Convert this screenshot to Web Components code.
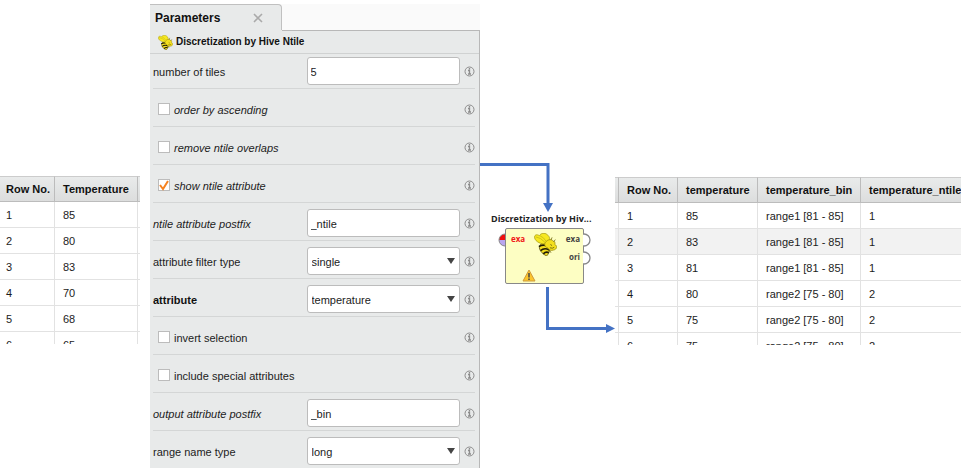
<!DOCTYPE html>
<html lang="en">
<head>
<meta charset="utf-8">
<title>Discretization by Hive Ntile</title>
<style>
    html, body {
        margin: 0;
        height: 100%;
        overflow: hidden;
        background: #fff;
        color: #1c1c1c;
        font: 11px/16px "Liberation Sans", Arial, sans-serif;
    }
</style>
</head>
<body>

<process-page>
    <data-table slot="input" widths="55,83," heads="Row No.|Temperature|"
        rows="1|85|;2|80|;3|83|;4|70|;5|68|;6|65|"></data-table>

    <param-panel slot="panel" tab="Parameters" heading="Discretization by Hive Ntile">
        <param-row type="text" label="number of tiles" value="5"></param-row>
        <param-row type="check" label="order by ascending" look="italic"></param-row>
        <param-row type="check" label="remove ntile overlaps" look="italic"></param-row>
        <param-row type="check" label="show ntile attribute" look="italic" checked></param-row>
        <param-row type="text" label="ntile attribute postfix" look="italic" value="_ntile"></param-row>
        <param-row type="select" label="attribute filter type" value="single"></param-row>
        <param-row type="select" label="attribute" look="bold" value="temperature"></param-row>
        <param-row type="check" label="invert selection"></param-row>
        <param-row type="check" label="include special attributes"></param-row>
        <param-row type="text" label="output attribute postfix" look="italic" value="_bin"></param-row>
        <param-row type="select" label="range name type" value="long"></param-row>
    </param-panel>

    <operator-flow slot="flow">
        <operator-node name="Discretization by Hiv..."></operator-node>
    </operator-flow>

    <data-table slot="output" widths="4,59,80,103," heads="|Row No.|temperature|temperature_bin|temperature_ntile" marked="1"
        rows="|1|85|range1 [81 - 85]|1;|2|83|range1 [81 - 85]|1;|3|81|range1 [81 - 85]|1;|4|80|range2 [75 - 80]|2;|5|75|range2 [75 - 80]|2;|6|75|range2 [75 - 80]|2"></data-table>
</process-page>

<script>
function attach(el, html) {
    const root = el.attachShadow({ mode: 'open' });
    root.innerHTML = html;
    return root;
}

class ProcessPage extends HTMLElement {
    constructor() {
        super();
        attach(this, `
            <style>
                :host {
                    display: grid;
                    grid-template-columns: minmax(0, 140fr) minmax(0, 340fr) 135px minmax(0, 346fr);
                    align-items: start;
                    min-height: 100%;
                }
                .input { padding-top: 176px; }
                .panel { padding: 4px 0 0 10px; }
                .flow { padding-top: 160px; }
                .output { padding-top: 177px; }
            </style>
            <div class="input"><slot name="input"></slot></div>
            <div class="panel"><slot name="panel"></slot></div>
            <div class="flow"><slot name="flow"></slot></div>
            <div class="output"><slot name="output"></slot></div>
        `);
    }
}

class DataTable extends HTMLElement {
    connectedCallback() {
        const widths = this.getAttribute('widths').split(',');
        const heads = this.getAttribute('heads').split('|');
        const rows = this.getAttribute('rows').split(';').map((row) => row.split('|'));
        const marked = parseInt(this.getAttribute('marked'), 10);
        attach(this, `
            <style>
                :host {
                    display: block;
                    /* the last row is cut by the edge of the view */
                    max-height: 168px;
                    overflow: hidden;
                }
                table {
                    width: 100%;
                    table-layout: fixed;
                    border-collapse: separate;
                    border-spacing: 0;
                }
                th, td {
                    box-sizing: border-box;
                    height: 26px;
                    padding: 0 0 0 8px;
                    text-align: left;
                    white-space: nowrap;
                    border-right: 1px solid #e2e2e2;
                    border-bottom: 1px solid #e2e2e2;
                }
                th {
                    color: #111;
                    font-weight: bold;
                    background: linear-gradient(#e9ebeb, #dcdddd);
                    border-color: #bcbcbc;
                    border-top: 1px solid #ccc;
                }
                th:first-child, td:first-child { padding-left: 6px; }
                th:last-child, td:last-child { border-right: 0; }
                th:empty, td:empty { padding: 0; }
                tr.marked td { background: #f2f2f2; }
            </style>
            <table>
                <colgroup>${widths.map((w) => `<col${w ? ` style="width:${w}px"` : ''}>`).join('')}</colgroup>
                <thead><tr>${heads.map((h) => `<th>${h}</th>`).join('')}</tr></thead>
                <tbody>${rows.map((row, i) => `
                    <tr${i === marked ? ' class="marked"' : ''}>${row.map((c) => `<td>${c}</td>`).join('')}</tr>`).join('')}
                </tbody>
            </table>
        `);
    }
}

class HiveBee extends HTMLElement {
    constructor() {
        super();
        attach(this, `
            <style>
                :host { display: block; width: 21px; height: 21px; }
                svg { display: block; width: 100%; height: 100%; }
            </style>
            <svg viewBox="0 0 42 42" aria-hidden="true">
                <path d="M13 20 C7 24 9 35 23 42 C29 36 30 28 27 20Z" fill="#f2dc1e" stroke="#3a3508" stroke-width="1.2"/>
                <path d="M9 25 Q17 19 26 25 M12 32 Q19 26 28 31 M17 38 Q22 33 27 36" fill="none" stroke="#1d1a06" stroke-width="3"/>
                <path d="M20 20 C10 20 0 14 1 6 C3 2 7 3 10 5 C12 0 20 -1 24 3 C29 6 30 13 27 18Z" fill="#f6e820" stroke="#a79b16" stroke-width="1.4"/>
                <path d="M3 7 Q12 8 20 17 M11 5 Q18 8 22 15" fill="none" stroke="#c9bb16" stroke-width="1.6"/>
                <path d="M21 17 C24 12 32 10 35 15 C38 14 39 18 38 21 C43 23 42 30 36 31 C31 33 27 31 25 27 C20 26 18 21 21 17Z" fill="#f4df1c" stroke="#9a8d10" stroke-width="1.4"/>
                <path d="M31 13 L33 8 M36 16 L39 12 M28 31 L31 36" stroke="#6b620c" stroke-width="1.4"/>
                <path d="M30 21 L33 23 M29 27 Q34 29 37 26" fill="none" stroke="#6b620c" stroke-width="1.6"/>
            </svg>
        `);
    }
}

class ParamPanel extends HTMLElement {
    connectedCallback() {
        attach(this, `
            <style>
                :host { display: block; background: #fafafa; }
                .tab {
                    box-sizing: border-box;
                    display: flex;
                    justify-content: space-between;
                    align-items: center;
                    width: 40%;
                    height: 26px;
                    padding: 0 18px 0 5px;
                    color: #111;
                    font-size: 12px;
                    font-weight: bold;
                    background: #e8eaea;
                    border: 1px solid #c0c0c0;
                    border-width: 1px 1px 0 0;
                    border-radius: 0 4px 0 0;
                }
                button {
                    display: block;
                    padding: 0;
                    border: 0;
                    background: none;
                }
                button svg { display: block; }
                .wrap { background: #e8eaea; }
                .bar {
                    height: 1px;
                    margin-left: 40%;
                    background: #b8b8b8;
                }
                .body { border-right: 1px solid #b8b8b8; }
                .title {
                    display: flex;
                    align-items: center;
                    gap: 3px;
                    height: 22px;
                    padding-left: 8px;
                    border-bottom: 1px solid #d0d2d2;
                }
                h2 {
                    margin: 0;
                    color: #111;
                    font-size: 10px;
                    font-weight: bold;
                    white-space: nowrap;
                }
                hive-bee { width: 15px; height: 15px; }
                .rows { padding: 0 4px 0 3px; }
                ::slotted(param-row:first-child) { padding-top: 3px; }
            </style>
            <div class="tab">
                <span>${this.getAttribute('tab')}</span>
                <button type="button" aria-label="Close">
                    <svg width="10" height="10" viewBox="0 0 10 10"><path d="M1 1 L9 9 M9 1 L1 9" stroke="#aaa" stroke-width="1.6"/></svg>
                </button>
            </div>
            <div class="wrap">
                <div class="bar"></div>
                <div class="body">
                    <div class="title"><hive-bee></hive-bee><h2>${this.getAttribute('heading')}</h2></div>
                    <div class="rows"><slot></slot></div>
                </div>
            </div>
        `);
    }
}

class ParamRow extends HTMLElement {
    connectedCallback() {
        const type = this.getAttribute('type');
        const label = this.getAttribute('label');
        const value = this.getAttribute('value');
        let control = '';
        switch (type) {
        case 'check':
            control = `
                <span class="check">
                    <input id="field" type="checkbox"${this.hasAttribute('checked') ? ' checked' : ''}>
                    <svg width="12" height="12" viewBox="0 0 12 12"><path d="M2 6 L5 10 L10 2" fill="none" stroke="#f58220" stroke-width="2"/></svg>
                    <label for="field">${label}</label>
                </span>`;
            break;

        case 'select':
            control = `
                <label for="field">${label}</label>
                <span class="drop">
                    <select id="field"><option>${value}</option></select>
                    <svg width="8" height="6" viewBox="0 0 8 6"><path d="M0 0 H8 L4 6Z" fill="#444"/></svg>
                </span>`;
            break;

        default:
            control = `
                <label for="field">${label}</label>
                <input id="field" class="box" type="text" value="${value}">`;
        }
        attach(this, `
            <style>
                :host {
                    display: grid;
                    grid-template-columns: minmax(0, 1fr) minmax(0, 1fr) 11px;
                    align-items: center;
                    column-gap: 4px;
                    padding: 6px 0 3px;
                    border-bottom: 1px solid #d4d6d6;
                }
                label { white-space: nowrap; padding-top: 2px; }
                :host([look="italic"]) label { font-style: italic; }
                :host([look="bold"]) label { font-weight: bold; color: #111; }
                .box, select {
                    box-sizing: border-box;
                    width: 100%;
                    height: 28px;
                    margin: 0;
                    padding: 2px 3px 0;
                    color: inherit;
                    font: inherit;
                    background: #fff;
                    border: 1px solid #bcbcbc;
                    border-radius: 3px;
                    outline: 0;
                }
                select { appearance: none; padding-left: 4px; }
                .drop, .check { display: grid; align-items: center; }
                .drop select, .drop svg { grid-area: 1 / 1; }
                .drop svg { justify-self: end; margin-right: 5px; pointer-events: none; }
                .box, .drop { margin-left: -2px; }
                .box { width: calc(100% + 2px); }
                .check {
                    grid-column: 1 / 3;
                    grid-template-columns: 12px 1fr;
                    column-gap: 4px;
                    height: 28px;
                    padding-left: 5px;
                }
                .check input {
                    grid-area: 1 / 1;
                    appearance: none;
                    box-sizing: border-box;
                    width: 12px;
                    height: 12px;
                    margin: 0;
                    background: #fff;
                    border: 1px solid #bcbcbc;
                }
                .check svg { grid-area: 1 / 1; z-index: 1; visibility: hidden; pointer-events: none; }
                .check input:checked + svg { visibility: visible; }
                .info { display: block; padding: 0; border: 0; background: none; }
                .info svg { display: block; }
            </style>
            ${control}
            <button class="info" type="button" aria-label="Help">
                <svg width="11" height="11" viewBox="0 0 22 22" fill="none" stroke="#8c8c8c">
                    <circle cx="11" cy="11" r="9" stroke-width="2"/>
                    <path d="M11 4 V7 M8 9 H11 V16 M8 16 H14" stroke-width="2.6"/>
                </svg>
            </button>
        `);
    }
}

class OperatorFlow extends HTMLElement {
    constructor() {
        super();
        attach(this, `
            <style>
                :host { display: flex; flex-direction: column; }
                svg { display: block; fill: none; stroke: #4472c4; stroke-width: 3; }
                .head { fill: #4472c4; stroke: none; }
            </style>
            <svg width="135" height="53" viewBox="0 0 135 53">
                <path d="M0 4.5 H68 V45"/>
                <path class="head" d="M63 43 H73 L68 52Z"/>
            </svg>
            <slot></slot>
            <svg width="135" height="49" viewBox="0 0 135 49">
                <path d="M67.5 3 V44.5 H128"/>
                <path class="head" d="M126 40 V49 L135 44.5Z"/>
            </svg>
        `);
    }
}

class OperatorNode extends HTMLElement {
    connectedCallback() {
        attach(this, `
            <style>
                :host {
                    display: block;
                    color: #444;
                    font: bold 8px/12px "Open Sans", sans-serif;
                }
                .name {
                    padding-left: 11px;
                    color: #222;
                    font: bold 9px/12px "DejaVu Sans", sans-serif;
                    font-family: "Open Sans", sans-serif;
                    white-space: nowrap;
                }
                .box {
                    position: relative;
                    box-sizing: border-box;
                    display: grid;
                    grid-template-columns: 1fr 23px 1fr;
                    width: 79px;
                    height: 56px;
                    margin: 3px 0 0 25px;
                    padding: 4px 3px 0 5px;
                    background: #fdfec3;
                    border: 1px solid #888;
                    border-radius: 2px;
                }
                hive-bee { width: 23px; height: 23px; }
                .in { color: #f01818; }
                .out { display: flex; flex-direction: column; gap: 6px; text-align: right; }
                .warn { position: absolute; left: 16px; bottom: 1px; }
                /* ports hang over the border of the box */
                .port { position: absolute; top: 4px; }
                .left { left: -8px; }
                .right { right: -8px; }
                .second { top: 22px; }
            </style>
            <div class="name">${this.getAttribute('name')}</div>
            <div class="box">
                <span class="in">exa</span>
                <hive-bee></hive-bee>
                <div class="out"><span>exa</span><span>ori</span></div>
                <svg class="warn" width="14" height="13" viewBox="0 0 28 26">
                    <path d="M14 2 L26 24 H2Z" fill="#fcc52c" stroke="#cf9a3c" stroke-width="2" stroke-linejoin="round"/>
                    <path d="M14 8 V17 M14 19 V22" stroke="#444" stroke-width="3"/>
                </svg>
                <svg class="port left" width="8" height="14" viewBox="0 0 8 14">
                    <path d="M7 1 A6 6 0 0 0 1 7 H7Z" fill="#f01010"/>
                    <path d="M1 7 A6 6 0 0 0 7 13 V7Z" fill="#b9a6ef"/>
                    <path d="M7 1 A6 6 0 0 0 7 13" fill="none" stroke="#888"/>
                </svg>
                <svg class="port right" width="8" height="14" viewBox="0 0 8 14">
                    <path d="M0 1 H1 A6 6 0 0 1 1 13 H0" fill="#fff" stroke="#888" stroke-width="1.3"/>
                </svg>
                <svg class="port right second" width="8" height="14" viewBox="0 0 8 14">
                    <path d="M0 1 H1 A6 6 0 0 1 1 13 H0" fill="#fff" stroke="#888" stroke-width="1.3"/>
                </svg>
            </div>
        `);
    }
}

customElements.define('process-page', ProcessPage);
customElements.define('data-table', DataTable);
customElements.define('hive-bee', HiveBee);
customElements.define('param-panel', ParamPanel);
customElements.define('param-row', ParamRow);
customElements.define('operator-flow', OperatorFlow);
customElements.define('operator-node', OperatorNode);
</script>
</body>
</html>
